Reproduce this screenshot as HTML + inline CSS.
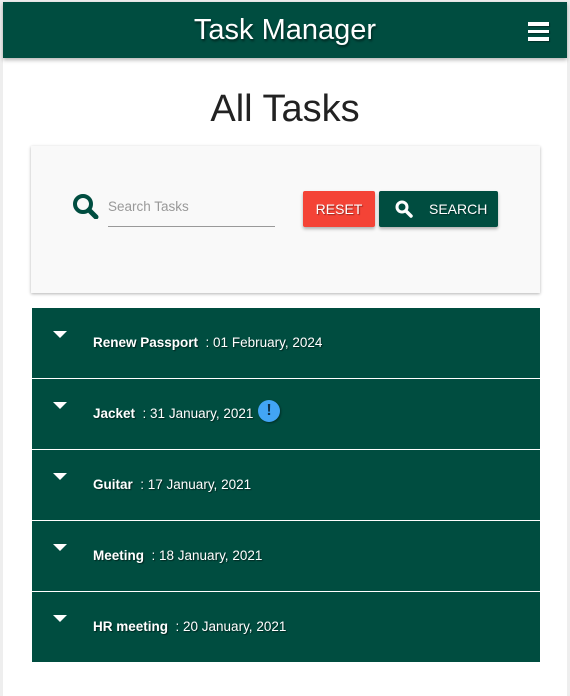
<!DOCTYPE html>
<html><head><style>
body{margin:0;width:570px;height:696px;background:#eee;font-family:"Liberation Sans",sans-serif;overflow:hidden;position:relative}
.page{position:absolute;left:3px;top:2px;width:564px;height:694px;background:#fff}
.hdr{position:absolute;left:0;top:0;width:564px;height:56px;background:#004d40;box-shadow:0 2px 4px rgba(0,0,0,.3)}
.hdr .t{position:absolute;left:0;width:564px;text-align:center;top:12px;color:#fff;font-size:29px;text-shadow:1px 2px 2px rgba(0,0,0,.5)}
.ham{position:absolute;left:525px;top:20px;width:21px}
.ham i{display:block;height:3.5px;background:#fff;margin-bottom:4px;box-shadow:1px 1px 1px rgba(0,0,0,.4)}
h1{position:absolute;left:0;width:570px;top:88px;margin:0;text-align:center;font-weight:normal;font-size:38px;color:#222}
.card{position:absolute;left:31px;top:146px;width:509px;height:147px;background:#f9f9f9;box-shadow:0 1px 3px rgba(0,0,0,.3)}
.inp{position:absolute;left:108px;top:199px;width:167px;height:27px;border-bottom:1px solid #999;color:#999;font-size:13.5px}
.btn{position:absolute;top:191px;height:36px;color:#fff;font-size:14px;line-height:36px;border-radius:2px;box-shadow:0 2px 3px rgba(0,0,0,.3);text-shadow:1px 1px 1px rgba(0,0,0,.4)}
.row{position:absolute;left:32px;width:508px;height:70px;background:#004d40;color:#fff;font-size:13.5px}
.row .tri{position:absolute;left:21px;top:23px;width:0;height:0;border-left:7px solid transparent;border-right:7px solid transparent;border-top:7px solid #fff}
.row .tx{position:absolute;left:61px;top:27px;text-shadow:1px 1px 1px rgba(0,0,0,.5)}
</style></head><body>
<div class="page"></div>
<div class="hdr" style="left:3px;top:2px"><div class="t">Task Manager</div><div class="ham"><i></i><i></i><i></i></div></div>
<h1>All Tasks</h1>
<div class="card"></div>
<svg style="position:absolute;left:72px;top:193px" width="30" height="26" viewBox="0 0 30 26"><circle cx="11" cy="11" r="8" fill="none" stroke="#004d40" stroke-width="4"/><line x1="17" y1="17" x2="24" y2="24" stroke="#004d40" stroke-width="5" stroke-linecap="round"/></svg>
<div class="inp">Search Tasks</div>
<div class="btn" style="left:303px;width:72px;background:#f44336;text-align:center">RESET</div>
<div class="btn" style="left:379px;width:119px;background:#004d40"><svg style="position:absolute;left:16px;top:9px" width="18" height="18" viewBox="0 0 18 18"><circle cx="7" cy="7" r="5" fill="none" stroke="#fff" stroke-width="3"/><line x1="11" y1="11" x2="16" y2="16" stroke="#fff" stroke-width="3.5" stroke-linecap="round"/></svg><span style="position:absolute;left:50px">SEARCH</span></div>
<div class="row" style="top:308px"><div class="tri"></div><div class="tx"><b>Renew Passport</b> &nbsp;: 01 February, 2024</div></div>
<div class="row" style="top:379px"><div class="tri"></div><div class="tx"><b>Jacket</b> &nbsp;: 31 January, 2021</div><div style="position:absolute;left:226px;top:21px;width:22px;height:22px;border-radius:50%;background:#42a5f5;color:#0d2f4a;text-align:center;font-weight:bold;font-size:16px;line-height:22px;box-shadow:1px 1px 2px rgba(0,0,0,.4)">!</div></div>
<div class="row" style="top:450px"><div class="tri"></div><div class="tx"><b>Guitar</b> &nbsp;: 17 January, 2021</div></div>
<div class="row" style="top:521px"><div class="tri"></div><div class="tx"><b>Meeting</b> &nbsp;: 18 January, 2021</div></div>
<div class="row" style="top:592px"><div class="tri"></div><div class="tx"><b>HR meeting</b> &nbsp;: 20 January, 2021</div></div>
</body></html>
